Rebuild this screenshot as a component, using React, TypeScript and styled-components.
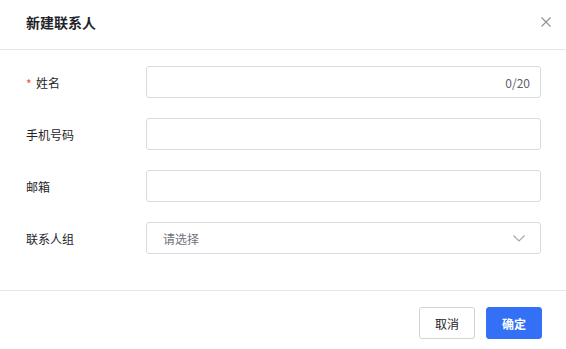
import React from "react";
import styled, { createGlobalStyle } from "styled-components";

const GlobalStyle = createGlobalStyle`
  body {
    margin: 0;
    background: #ffffff;
    font-family: "Noto Sans CJK SC", "Noto Sans", sans-serif;
    color: #1f2329;
  }
`;

const fields = [
  { label: "姓名", required: true, counter: "0/20" },
  { label: "手机号码" },
  { label: "邮箱" },
];

function App() {
  return (
    <>
      <GlobalStyle />
      <Dialog>
        <Header>
          <Title>新建联系人</Title>
          <CloseButton aria-label="close">
            <svg width="10" height="10" viewBox="0 0 10 10">
              <path d="M0.5 0.5 L9.5 9.5 M9.5 0.5 L0.5 9.5" stroke="#8a8f99" strokeWidth="1.1" />
            </svg>
          </CloseButton>
        </Header>
        <Body>
          {fields.map((f) => (
            <Row key={f.label}>
              <Label>
                {f.required && <Star>*</Star>}
                {f.label}
              </Label>
              <Field>
                {f.counter && <Counter>{f.counter}</Counter>}
              </Field>
            </Row>
          ))}
          <Row>
            <Label>联系人组</Label>
            <Field>
              <Placeholder>请选择</Placeholder>
              <svg width="12" height="7" viewBox="0 0 12 7">
                <path d="M0.5 0.5 L6 6 L11.5 0.5" fill="none" stroke="#a0a5ae" strokeWidth="1.1" />
              </svg>
            </Field>
          </Row>
        </Body>
        <Footer>
          <Button>取消</Button>
          <Button primary>确定</Button>
        </Footer>
      </Dialog>
    </>
  );
}

export default App;

const Dialog = styled.div`
  width: 566px;
  height: 349px;
  background: #fff;
`;

const Header = styled.div`
  height: 49px;
  border-bottom: 1px solid #e6e6ee;
  display: flex;
  justify-content: space-between;
  align-items: flex-start;
  padding: 0 15px 0 26px;
  box-sizing: content-box;
`;

const Title = styled.div`
  font-size: 14px;
  font-weight: 700;
  line-height: 20px;
  margin-top: 12px;
  color: #1f2329;
`;

const CloseButton = styled.div`
  width: 10px;
  height: 10px;
  margin-top: 17px;
  display: flex;
`;

const Body = styled.div`
  display: flex;
  flex-direction: column;
  gap: 20px;
  padding: 16px 25px 36px 26px;
  border-bottom: 1px solid #e6e6ee;
`;

const Row = styled.div`
  display: flex;
  align-items: center;
  height: 32px;
`;

const Label = styled.div`
  width: 120px;
  font-size: 12px;
  color: #1f2329;
  display: flex;
  align-items: center;
`;

const Star = styled.span`
  color: #f54a45;
  margin-right: 4px;
  width: 6px;
  font-size: 12px;
  line-height: 12px;
  padding-top: 3px;
`;

const Field = styled.div`
  flex: 1;
  height: 32px;
  box-sizing: border-box;
  border: 1px solid #d9dbe0;
  border-radius: 3px;
  display: flex;
  align-items: center;
  justify-content: space-between;
  padding: 0 15px 0 16px;
  font-size: 12px;
`;

const Counter = styled.span`
  margin-left: auto;
  margin-right: -5px;
  color: #5d6169;
`;

const Placeholder = styled.span`
  color: #6d727b;
`;

const Footer = styled.div`
  display: flex;
  justify-content: flex-end;
  gap: 11px;
  padding: 16px 24px 0 0;
`;

const Button = styled.button<{ primary?: boolean }>`
  width: 56px;
  height: 32px;
  border-radius: 3px;
  font-family: inherit;
  font-size: 12px;
  font-weight: ${(p) => (p.primary ? 700 : 400)};
  cursor: pointer;
  background: ${(p) => (p.primary ? "#3370f5" : "#fff")};
  color: ${(p) => (p.primary ? "#fff" : "#1f2329")};
  border: 1px solid ${(p) => (p.primary ? "#3370f5" : "#d0d3d9")};
`;
